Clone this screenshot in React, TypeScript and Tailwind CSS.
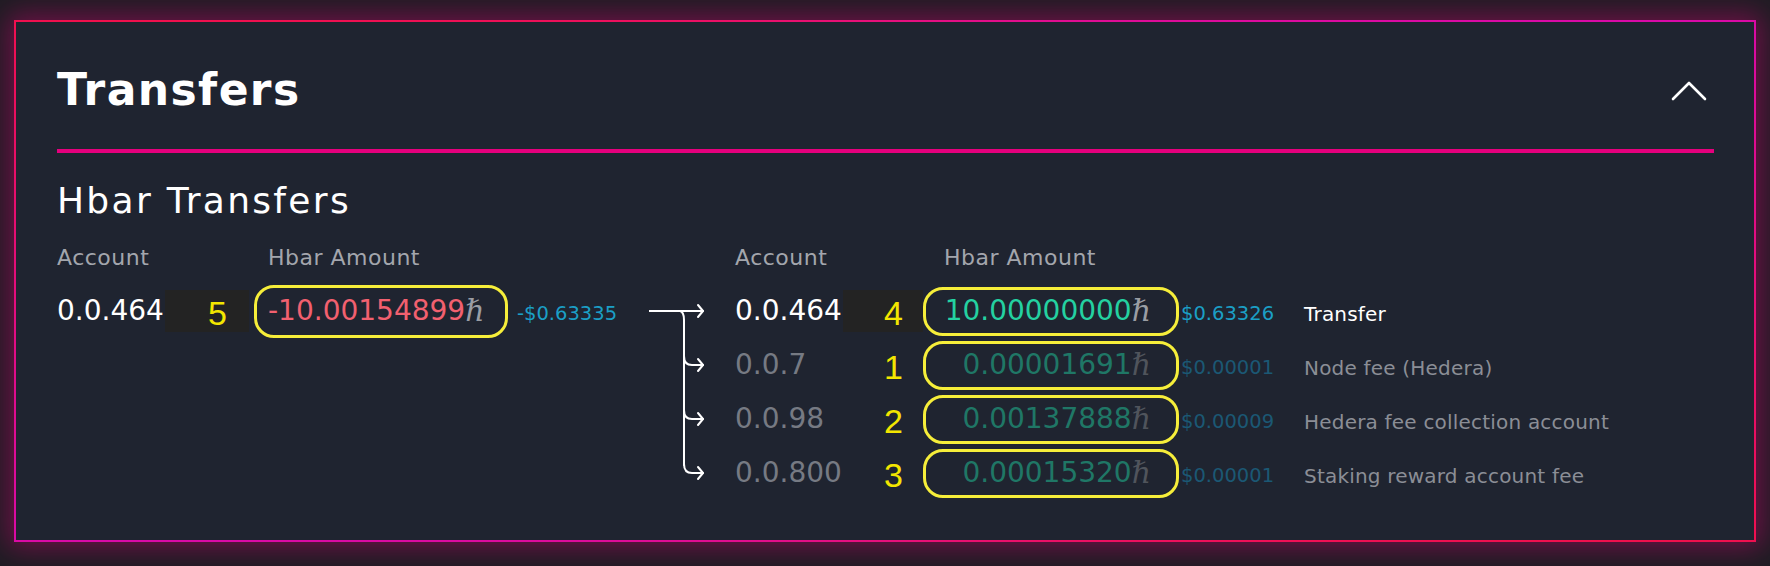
import { useState } from 'react';

type Row = {
  account: string;
  marker: string;
  amount: string;
  usd: string;
  desc: string;
  main: boolean;
};

const credits: Row[] = [
  { account: '0.0.464', marker: '4', amount: '10.00000000', usd: '$0.63326', desc: 'Transfer', main: true },
  { account: '0.0.7', marker: '1', amount: '0.00001691', usd: '$0.00001', desc: 'Node fee (Hedera)', main: false },
  { account: '0.0.98', marker: '2', amount: '0.00137888', usd: '$0.00009', desc: 'Hedera fee collection account', main: false },
  { account: '0.0.800', marker: '3', amount: '0.00015320', usd: '$0.00001', desc: 'Staking reward account fee', main: false },
];

function Hbar({ dim }: { dim?: boolean }) {
  return (
    <span className={`font-['Liberation_Serif','DejaVu_Serif',serif] italic text-[30px] leading-none ${dim ? 'text-[#50545c]' : 'text-[#9a9da4]'}`}>
      ℏ
    </span>
  );
}

function Marker({ n, boxed, width, pr }: { n: string; boxed: boolean; width: string; pr: string }) {
  return (
    <div className={`${width} h-[42px] shrink-0 flex items-center justify-end ${pr} ${boxed ? 'bg-[#232323]' : ''}`}>
      <span className="font-['Liberation_Sans',sans-serif] text-[34px] leading-none text-[#f3e600] pt-[4px]">{n}</span>
    </div>
  );
}

function Arrows() {
  const ys = [81, 135, 189];
  return (
    <svg width="56" height="216" viewBox="0 0 56 216" fill="none" stroke="#ffffff" strokeWidth="2" strokeLinecap="round" strokeLinejoin="round">
      <path d="M0 27 H54" />
      <path d="M49 21 L54 27 L49 33" />
      <path d="M31 27 Q35 28 35 36 V181" />
      {ys.map(y => (
        <g key={y}>
          <path d={`M35 ${y - 9} Q35 ${y} 43 ${y} H54`} />
          <path d={`M49 ${y - 6} L54 ${y} L49 ${y + 6}`} />
        </g>
      ))}
    </svg>
  );
}

export default function App() {
  const [open, setOpen] = useState(true);

  return (
    <div className="h-[566px] w-[1770px] bg-[#1e1c23] px-[14px] pt-[20px] pb-[24px] font-['DejaVu_Sans',sans-serif]">
      <div className="h-full p-[2px] bg-[conic-gradient(from_0deg,#e6107c,#d90aa8_20%,#f0104c_30%,#e6107c_50%,#d90aa8_70%,#f0104c_80%,#e6107c)] shadow-[0_0_26px_6px_rgba(220,0,120,0.42)]">
        <div className="h-full bg-[#1f2430] pl-[41px] pr-[40px] pt-[46px]">
          {/* Header */}
          <div className="flex items-center justify-between">
            <h1 className="text-[44px] leading-[44px] font-bold tracking-[1.4px] text-white">Transfers</h1>
            <button onClick={() => setOpen(!open)} className="mr-[7px] text-white" aria-label="Collapse">
              <svg width="36" height="21" viewBox="0 0 36 21" fill="none" stroke="currentColor" strokeWidth="2.6" strokeLinecap="round" strokeLinejoin="round">
                <polyline points="2,19 18,3 34,19" />
              </svg>
            </button>
          </div>

          <div className="mt-[37px] h-[4px] bg-[#e5007d]" />

          <h2 className="mt-[30px] text-[36px] leading-[36px] tracking-[2.3px] text-white">Hbar Transfers</h2>

          <div className="mt-[28px] flex">
            {/* Sender */}
            <div className="w-[592px] shrink-0">
              <div className="flex h-[22px] text-[22px] leading-[22px] tracking-[0.5px] text-[#a3a6ad]">
                <span className="w-[211px]">Account</span>
                <span>Hbar Amount</span>
              </div>
              <div className="mt-[15px] flex h-[54px] items-center">
                <span className="w-[108px] shrink-0 whitespace-nowrap text-[28px] text-white">0.0.464</span>
                <Marker n="5" boxed width="w-[84px]" pr="pr-[22px]" />
                <div className="ml-[5px] flex h-[53px] w-[254px] shrink-0 items-center rounded-[20px] border-[3px] border-[#f6ee3a] pl-[11px]">
                  <span className="text-[28px] text-[#f2606f]">-10.00154899</span>
                  <Hbar />
                </div>
                <span className="ml-[9px] mt-[6px] whitespace-nowrap text-[19.5px] leading-[20px] text-[#1b9fc6]">-$0.63335</span>
              </div>
            </div>

            {/* Arrows */}
            <div className="w-[56px] shrink-0 pt-[37px]">
              <Arrows />
            </div>

            {/* Receivers */}
            <div className="ml-[30px]">
              <div className="flex h-[22px] text-[22px] leading-[22px] tracking-[0.5px] text-[#a3a6ad]">
                <span className="w-[209px]">Account</span>
                <span>Hbar Amount</span>
              </div>
              <div className="mt-[15px]">
                {credits.map(r => (
                  <div key={r.account} className="flex h-[54px] items-center">
                    <span className={`w-[108px] shrink-0 whitespace-nowrap text-[28px] ${r.main ? 'text-white' : 'text-[#767a83]'}`}>
                      {r.account}
                    </span>
                    <Marker n={r.marker} boxed={r.main} width="w-[80px]" pr="pr-[20px]" />
                    <div className="flex h-[49px] w-[256px] shrink-0 items-center justify-end rounded-[20px] border-[3px] border-[#f6ee3a] pr-[25px]">
                      <span className={`text-[28px] ${r.main ? 'text-[#24d1a1]' : 'text-[#1f7766]'}`}>{r.amount}</span>
                      <Hbar dim={!r.main} />
                    </div>
                    <span className={`ml-[2px] mt-[6px] w-[123px] shrink-0 text-[19.5px] leading-[20px] ${r.main ? 'text-[#1b9fc6]' : 'text-[#1b5874]'}`}>
                      {r.usd}
                    </span>
                    <span className={`mt-[6px] whitespace-nowrap text-[20px] leading-[20px] tracking-[0.2px] ${r.main ? 'text-white' : 'text-[#8b8e96]'}`}>
                      {r.desc}
                    </span>
                  </div>
                ))}
              </div>
            </div>
          </div>
        </div>
      </div>
    </div>
  );
}
